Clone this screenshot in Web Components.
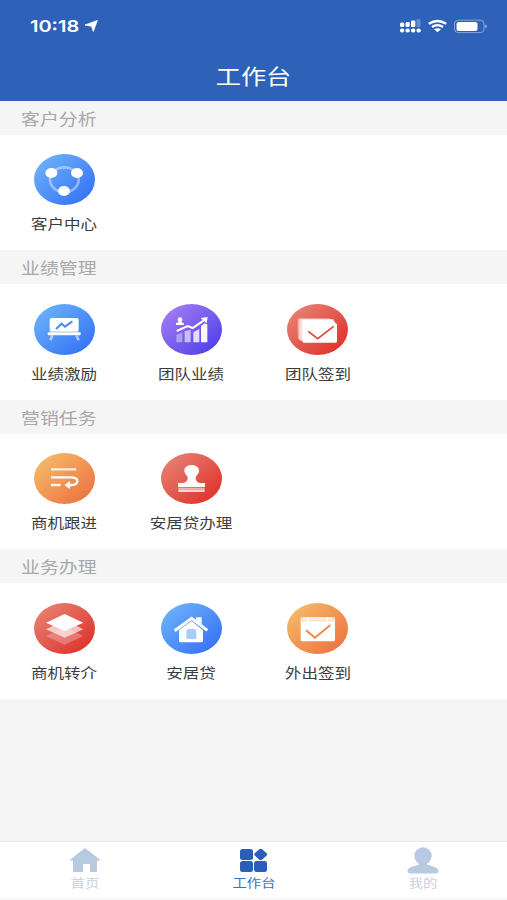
<!DOCTYPE html>
<html lang="zh-CN">
<head>
<meta charset="utf-8">
<meta name="viewport" content="width=device-width">
<title>工作台</title>
<style>
  body {
    margin: 0;
    font-family: "Noto Sans CJK SC", sans-serif;
    background: #f5f5f5;
  }
</style>
</head>
<body>
<work-app>
  <app-header slot="header" time="10:18">工作台</app-header>
  <app-section label="客户分析">
    <app-tile icon="share" tone="blue">客户中心</app-tile>
  </app-section>
  <app-section label="业绩管理">
    <app-tile icon="board" tone="blue">业绩激励</app-tile>
    <app-tile icon="growth" tone="purple">团队业绩</app-tile>
    <app-tile icon="cards" tone="red">团队签到</app-tile>
  </app-section>
  <app-section label="营销任务">
    <app-tile icon="follow" tone="orange">商机跟进</app-tile>
    <app-tile icon="stamp" tone="red">安居贷办理</app-tile>
  </app-section>
  <app-section label="业务办理">
    <app-tile icon="layers" tone="red">商机转介</app-tile>
    <app-tile icon="house" tone="blue">安居贷</app-tile>
    <app-tile icon="calendar" tone="orange">外出签到</app-tile>
  </app-section>
  <tab-bar slot="footer">
    <tab-item icon="home">首页</tab-item>
    <tab-item icon="grid" active>工作台</tab-item>
    <tab-item icon="user">我的</tab-item>
  </tab-bar>
</work-app>

<script>
// tile glyphs, all drawn in a 183 x 153 box
const tileIcons = {
  share: `
    <ellipse cx="91" cy="77" rx="43" ry="37" fill="none" stroke="#fff" stroke-opacity=".42" stroke-width="8"/>
    <g fill="#fff"><ellipse cx="52" cy="57" rx="18" ry="15"/><ellipse cx="129" cy="57" rx="18" ry="15"/><ellipse cx="90" cy="111" rx="18" ry="15"/></g>`,
  board: `
    <path d="M55 94l-6 15M127 94l7 15" stroke="#fff" stroke-opacity=".55" stroke-width="8"/>
    <rect x="47" y="42" width="87" height="42" rx="6" fill="#fff"/>
    <rect x="41" y="84" width="99" height="10" rx="3" fill="#fff"/>
    <path d="M43 84h95" stroke="#73a9f8" stroke-width="2"/>
    <path d="M66 75l17-16 10 9 22-16" fill="none" stroke="#4a8bf6" stroke-width="6"/>`,
  growth: `
    <g fill="#fff"><path d="M46 92l18-6v29H46z" opacity=".4"/><path d="M71 82l18-5v38H71z" opacity=".6"/><path d="M97 85l18-10v40H97z" opacity=".8"/><path d="M120 66l10-8 9 3v54h-19z" opacity=".95"/>
    <ellipse cx="57" cy="47" rx="7" ry="7"/><path d="M53 50h8v5l7 2v6H45v-6l8-2z"/><path d="M119 42l21-3-3 19z"/></g>
    <path d="M47 81l33-15 15 6 37-25" fill="none" stroke="#fff" stroke-width="6"/>`,
  cards: `
    <rect x="32" y="43" width="100" height="63" rx="5" fill="#fff" opacity=".45"/>
    <rect x="37" y="45" width="105" height="66" rx="5" fill="#fff" opacity=".6"/>
    <path d="M47 47h88l15 14v51q0 4-4 4H51q-5 0-5-5V51z" fill="#fff"/>
    <path d="M64 82l28 22 48-37" fill="none" stroke="#e0473e" stroke-width="5"/>`,
  follow: `
    <g fill="none" stroke="#fff" stroke-width="7"><path d="M51 49h76" stroke-opacity=".8"/><path d="M51 73h62q17 1 17 11 0 12-17 12h-14" stroke-width="7"/><path d="M51 96h29"/></g>
    <path d="M91 96l17-12v24z" fill="#fff"/>`,
  stamp: `
    <g fill="#fff"><path d="M92 36c13 0 22 7 22 17 0 11-10 13-10 22 0 10 7 15 17 15h11v12H51V90h11c10 0 18-5 18-15 0-9-10-11-10-22 0-10 9-17 22-17z"/>
    <path d="M52 104h79v6H52z" opacity=".55"/><path d="M52 110h79v7H52z" opacity=".75"/></g>`,
  layers: `
    <g fill="#fff"><path d="M92 72l56 27-56 26-56-26z" opacity=".25"/><path d="M92 52l56 27-56 25-56-25z" opacity=".65"/><path d="M92 33l56 26-56 25-56-25z"/></g>`,
  house: `
    <path d="M41 83l51-37 47 36" fill="none" stroke="#fff" stroke-width="9"/>
    <path d="M105 43h17v21l-17-12z" fill="#fff"/>
    <path d="M54 82l38-28 34 28v31q0 5-5 5H59q-5 0-5-5z" fill="#fff"/>
    <path d="M76 108V86q0-8 8-8h14q8 0 8 8v22z" fill="#a6cdfc"/>`,
  calendar: `
    <rect x="41" y="42" width="103" height="73" rx="5" fill="#fff"/>
    <path d="M43 42h98v13H43z" fill="#f9b173" opacity=".5"/>
    <path d="M48 47h11M70 47h44M124 47h11" stroke="#fff" stroke-width="9" opacity=".65"/>
    <path d="M64 42v14M120 42v14" stroke="#fff" stroke-width="7"/>
    <path d="M57 82l27 22 46-38" fill="none" stroke="#ee8c4d" stroke-width="6"/>`
}

const tones = {
  blue: ["#6bb1fa", "#3672f6"],
  purple: ["#a37bf5", "#5040e8"],
  red: ["#e88073", "#dd332b"],
  orange: ["#f5b967", "#ee7343"]
}

const tabIcons = {
  home: `<path d="M16 0L32 12.5h-4V23q0 1-1 1h-6v-8h-7v8H5q-1 0-1-1V12.5H0z"/>`,
  grid: `<rect x="2" y="1" width="13" height="11" rx="2.5"/><path d="M21 1.4q1.7-1.4 3.4 0l4 3.6q1.4 1.4 0 2.8l-4 3.6q-1.7 1.4-3.4 0l-4-3.6q-1.4-1.4 0-2.8z"/><rect x="2" y="13" width="13" height="11" rx="2.5"/><rect x="16" y="13" width="13" height="11" rx="2.5"/>`,
  user: `<ellipse cx="16" cy="8" rx="8.700" ry="8.800"/><path d="M12 14h8v2.400c3 1.600 11 2.200 11.500 6.100 0 2.300-1 3-3 3h-25c-2 0-3-.7-3-3C1 18.600 9 18 12 16.400z"/>`
}

// text with the glyphs widened sideways
class WideText extends HTMLElement {
  constructor() {
    super()
    this.attachShadow({ mode: "open" })
    this.shadowRoot.innerHTML = `
    <style>
      :host {
        display: block;
        white-space: nowrap;
        transform: scaleX(var(--stretch, 1.18));
        transform-origin: var(--stretch-origin, center);
      }
    </style>
    <slot></slot>`
  }
}
customElements.define("wide-text", WideText)

class WorkApp extends HTMLElement {
  constructor() {
    super()
    this.attachShadow({ mode: "open" })
    this.shadowRoot.innerHTML = `
    <style>
      :host {
        display: flex;
        flex-direction: column;
        height: 900px;
        overflow: hidden;
        background: #f5f5f5;
      }
      main {
        flex: 1;
      }
    </style>
    <slot name="header"></slot>
    <main><slot></slot></main>
    <slot name="footer"></slot>`
  }
}
customElements.define("work-app", WorkApp)

class AppHeader extends HTMLElement {
  constructor() {
    super()
    this.attachShadow({ mode: "open" })
  }

  connectedCallback() {
    this.shadowRoot.innerHTML = `
    <style>
      :host {
        display: flex;
        flex-direction: column;
        height: 100.5px;
        flex: none;
        background: #2e62b8;
        color: #fff;
      }
      .status {
        display: flex;
        align-items: center;
        height: 52px;
        padding: 0 20px 0 30px;
      }
      .time {
        --stretch: 1.21;
        --stretch-origin: left;
        width: 55px;
        font: 600 16.5px/20px Inter, sans-serif;
      }
      .signals {
        margin-left: auto;
      }
      svg {
        display: block;
      }
      .title {
        --stretch: 1.2;
        align-self: center;
        font-size: 21px;
        line-height: 30px;
        margin-top: 8px;
      }
    </style>
    <div class="status">
      <wide-text class="time">${this.getAttribute("time")}</wide-text>
      <svg width="13" height="12" viewBox="0 0 13 12"><path d="M12.300.4L8.300 11.400 6.500 6.300 0 5z" fill="#fff" stroke="#fff" stroke-width=".8" stroke-linejoin="round"/></svg>
      <svg class="signals" width="87" height="16" viewBox="400 18 87 16">
        <g fill="#fff">
          <rect x="400" y="22.5" width="4.300" height="4.500" rx="1.500"/><rect x="405.500" y="22" width="4.300" height="5" rx="1.500"/><rect x="411" y="20.500" width="4.300" height="6.500" rx="1"/><rect x="416.500" y="19" width="4" height="8" rx="1" opacity=".28"/>
          <rect x="400" y="28.500" width="4.300" height="4" rx="1.800"/><rect x="405.500" y="28.500" width="4.300" height="4" rx="1.800"/><rect x="411" y="28.500" width="4.300" height="4" rx="1.800"/><rect x="416.500" y="28.500" width="4.300" height="4" rx="1.800"/>
          <path d="M434 29.200q3.500-2 7 0L437.500 32.300z"/>
          <rect x="456.500" y="22" width="21" height="9" rx="2"/>
          <path d="M485.300 24.300q3 2 0 4z" opacity=".6"/>
        </g>
        <g fill="none" stroke="#fff">
          <path d="M428.800 23.700q8.700-5.500 17.400 0M432 26.900q5.500-3.500 11 0" stroke-width="2.400"/>
          <rect x="454.500" y="20.200" width="29.500" height="12.400" rx="3.500" stroke-opacity=".42"/>
        </g>
      </svg>
    </div>
    <wide-text class="title"><slot></slot></wide-text>`
  }
}
customElements.define("app-header", AppHeader)

class AppSection extends HTMLElement {
  constructor() {
    super()
    this.attachShadow({ mode: "open" })
  }

  connectedCallback() {
    this.shadowRoot.innerHTML = `
    <style>
      :host {
        display: block;
      }
      .label {
        --stretch-origin: left;
        height: 34px;
        padding-left: 21px;
        font-size: 16px;
        line-height: 35px;
        color: #a8a8a8;
      }
      .tiles {
        display: grid;
        grid-template-columns: repeat(4, 1fr);
        height: 115.6px;
        padding-left: 1px;
        margin-right: -1px;
        background: #fff;
      }
    </style>
    <div class="label"><wide-text>${this.getAttribute("label")}</wide-text></div>
    <div class="tiles"><slot></slot></div>`
  }
}
customElements.define("app-section", AppSection)

class AppTile extends HTMLElement {
  constructor() {
    super()
    this.attachShadow({ mode: "open" })
  }

  connectedCallback() {
    const [from, to] = tones[this.getAttribute("tone")]
    this.shadowRoot.innerHTML = `
    <style>
      :host {
        display: flex;
        flex-direction: column;
        align-items: center;
        padding-top: 19.8px;
        font-size: 14px;
        line-height: 20px;
        color: #3c3c3c;
      }
      svg {
        display: block;
        width: 61px;
        height: 51px;
        margin-bottom: 8px;
      }
    </style>
    <svg viewBox="0 0 183 153">
      <defs><linearGradient id="tone" x1=".1" y1=".1" x2=".9" y2=".9"><stop stop-color="${from}"/><stop offset="1" stop-color="${to}"/></linearGradient></defs>
      <ellipse cx="91.5" cy="76.5" rx="91.5" ry="76.5" fill="url(#tone)"/>
      ${tileIcons[this.getAttribute("icon")]}
    </svg>
    <wide-text><slot></slot></wide-text>`
  }
}
customElements.define("app-tile", AppTile)

class TabBar extends HTMLElement {
  constructor() {
    super()
    this.attachShadow({ mode: "open" })
    this.shadowRoot.innerHTML = `
    <style>
      :host {
        display: grid;
        grid-template-columns: repeat(3, 1fr);
        flex: none;
        box-sizing: border-box;
        height: 59px;
        padding-left: 1px;
        border-top: 1px solid #e6e6e6;
        border-bottom: 2px solid #f7f7f7;
        background: #fff;
      }
    </style>
    <slot></slot>`
  }
}
customElements.define("tab-bar", TabBar)

class TabItem extends HTMLElement {
  constructor() {
    super()
    this.attachShadow({ mode: "open" })
  }

  connectedCallback() {
    this.shadowRoot.innerHTML = `
    <style>
      :host {
        --stretch: 1.2;
        display: flex;
        flex-direction: column;
        align-items: center;
        padding-top: 6px;
        font-size: 12px;
        line-height: 16px;
        color: #c8d0df;
      }
      :host([active]) {
        color: #3f70bf;
      }
      svg {
        display: block;
        overflow: visible;
        fill: #b8cae2;
        margin-bottom: 0.5px;
      }
      :host([active]) svg {
        fill: #2a5fb9;
      }
    </style>
    <svg width="32" height="26" viewBox="0 0 32 26">${tabIcons[this.getAttribute("icon")]}</svg>
    <wide-text><slot></slot></wide-text>`
  }
}
customElements.define("tab-item", TabItem)
</script>
</body>
</html>
